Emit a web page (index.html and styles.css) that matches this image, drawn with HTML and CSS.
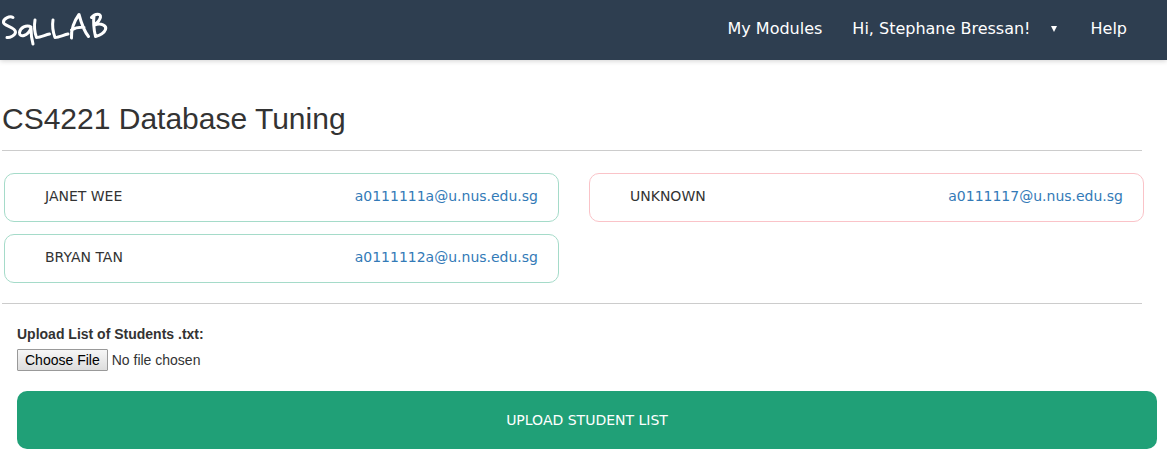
FILE: index.html
```html
<!DOCTYPE html>
<html lang="en">
<head>
<meta charset="utf-8">
<meta name="viewport" content="width=device-width, initial-scale=1">
<title>SqLLAB</title>
<link rel="stylesheet" href="styles.css">
</head>
<body>
<header class="navbar">
  <a class="brand" href="#" aria-label="SqLLAB home">
    <svg class="logo" viewBox="0 0 110 48" width="110" height="48" aria-hidden="true">
      <path d="M13 17.500C9.500 15.500 3 19 3.500 22.500C4 26 15.500 27 15.500 32C15.500 35.500 9.500 38 7 37.500"/>
      <path d="M31 27C26.500 24 20 28 19.500 32.500C19 38 28 36.500 31 28C31 34 31.500 39 33 44"/>
      <path d="M35 20C34 26 34.500 32 36.500 37.500C40.500 37.500 45 35 49.500 34"/>
      <path d="M53 20C52 26 53 32 55 37.500C59 37.500 63.500 35 68 34"/>
      <path d="M71.500 38C71 29 75 20 79 14.500C81 22 84 31 88.500 36.500M71.500 30C76 27.500 80 27 84 27.500"/>
      <path d="M94 16C93 23 94 30 95.500 36.500M91.500 17.500C95 13 101 13.500 100.500 17C100 20.500 97 23 94.500 25C101 22.500 107 25.500 105.500 29.500C104 33.500 99 35.500 95.500 36.500"/>
    </svg>
  </a>
  <nav class="menu">
    <a href="#">My Modules</a>
    <a class="user" href="#">Hi, Stephane Bressan!
      <svg class="caret" viewBox="0 0 6 6" width="6" height="6" aria-hidden="true"><path d="M0 0H6L3 6Z"/></svg>
    </a>
    <a href="#">Help</a>
  </nav>
</header>
<main class="page">
  <h1 class="title">CS4221 Database Tuning</h1>
  <section class="students">
    <article class="card"><span>JANET WEE</span><a href="#">a0111111a@u.nus.edu.sg</a></article>
    <article class="card unknown"><span>UNKNOWN</span><a href="#">a0111117@u.nus.edu.sg</a></article>
    <article class="card"><span>BRYAN TAN</span><a href="#">a0111112a@u.nus.edu.sg</a></article>
  </section>
  <form class="upload">
    <label for="students">Upload List of Students .txt:</label>
    <input id="students" class="file" type="file" accept=".txt">
    <button class="submit" type="submit">UPLOAD STUDENT LIST</button>
  </form>
</main>
</body>
</html>
```
FILE: styles.css
```css
* {
  box-sizing: border-box;
}

body {
  margin: 0;
  background: #fff;
  color: #333;
  font-family: Verdana, "DejaVu Sans", sans-serif;
  font-size: 14px;
  line-height: 20px;
}

a {
  color: #337ab7;
  text-decoration: none;
}

.navbar {
  display: flex;
  justify-content: space-between;
  height: 60px;
  padding-right: 40px;
  background: #2e3e50;
  box-shadow: 0 1px 5px rgba(0, 0, 0, 0.18);
}

.logo {
  display: block;
  fill: none;
  stroke: #fff;
  stroke-width: 3;
  stroke-linecap: round;
  stroke-linejoin: round;
}

.menu {
  display: flex;
  align-items: center;
  gap: 30px;
  padding-bottom: 2px;
  font-size: 16px;
}

.menu a {
  color: #fff;
}

.user {
  display: flex;
  align-items: center;
  gap: 20px;
  padding-right: 4px;
}

.caret {
  fill: #fff;
}

.title {
  margin: 0 25px 0 2px;
  padding: 42px 0 15px;
  border-bottom: 1px solid #ccc;
  font: 400 30px/33px Arial, "Liberation Sans", sans-serif;
}

.students {
  display: grid;
  grid-template-columns: 1fr 1fr;
  gap: 12px 32px;
  margin: 0 25px 0 2px;
  padding: 22px 0 20px 2px;
  border-bottom: 1px solid #ccc;
}

.card {
  display: flex;
  justify-content: space-between;
  margin-right: -2px;
  padding: 12px 20px 15px 40px;
  border: 1px solid #a5dbc9;
  border-radius: 10px;
}

.unknown {
  border-color: #fac3c8;
}

.upload {
  display: flex;
  flex-direction: column;
  padding: 20px 10px 6px 17px;
  font-family: Arial, "Liberation Sans", sans-serif;
}

.upload label {
  margin-bottom: 5px;
  font-weight: 700;
}

.file {
  margin-bottom: 20px;
  font: 14px/20px Arial, "Liberation Sans", sans-serif;
}

.file::file-selector-button {
  height: 22px;
  margin: 0 4px 0 0;
  padding: 0 7px;
  border: 1px solid #999;
  border-radius: 1px;
  background: linear-gradient(#f6f6f6, #ddd);
  color: #000;
  font: inherit;
}

.submit {
  padding: 19px;
  border: 0;
  border-radius: 10px;
  background: #20a077;
  color: #fff;
  font: 14px/20px Verdana, "DejaVu Sans", sans-serif;
}
```
